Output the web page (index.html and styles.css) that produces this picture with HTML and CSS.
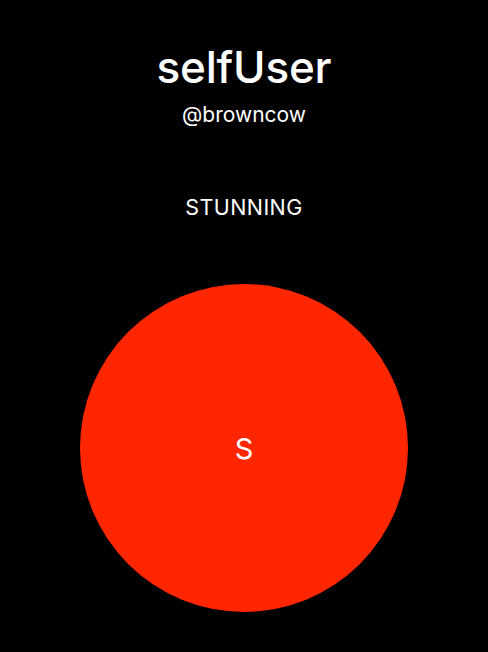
FILE: index.html
```html
<!DOCTYPE html>
<html>
<head>
<meta charset="utf-8">
<link rel="stylesheet" href="styles.css">
</head>
<body>
<main class="profile">
  <h1 class="name">selfUser</h1>
  <div class="handle">@browncow</div>
  <div class="status">STUNNING</div>
  <div class="avatar"><span class="initial">S</span></div>
</main>
</body>
</html>
```
FILE: styles.css
```css
html, body {
  margin: 0;
  padding: 0;
  background: #000;
  height: 100%;
}
.profile {
  display: flex;
  flex-direction: column;
  align-items: center;
  color: #fff;
  font-family: Inter, "Liberation Sans", sans-serif;
  padding-top: 41px;
}
.name {
  margin: 0;
  font-size: 44px;
  font-weight: 500;
  line-height: 52px;
  letter-spacing: -0.2px;
}
.handle {
  margin-top: 10px;
  font-size: 21px;
  line-height: 24px;
}
.status {
  margin-top: 68px;
  font-size: 21.5px;
  line-height: 24px;
  letter-spacing: 0.4px;
}
.avatar {
  margin-top: 65px;
  width: 328px;
  height: 328px;
  border-radius: 50%;
  background: #ff2600;
  display: flex;
  align-items: center;
  justify-content: center;
}
.initial {
  font-size: 29px;
  line-height: 1;
}
```
